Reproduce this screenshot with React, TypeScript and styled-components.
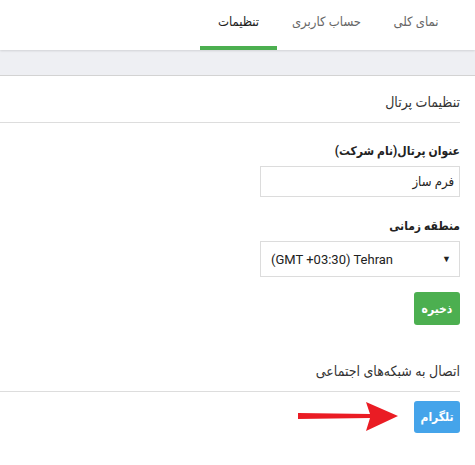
import styled, { createGlobalStyle } from "styled-components";

const GlobalStyle = createGlobalStyle`
  html, body {
    margin: 0;
    padding: 0;
    background: #fff;
  }
  body {
    font-family: "Roboto", "DejaVu Sans Condensed", "DejaVu Sans", sans-serif;
    color: #333;
  }
`;

const Page = styled.div`
  width: 475px;
  height: 465px;
  overflow: hidden;
  direction: rtl;
  background: #fff;
`;

const TabBar = styled.div`
  height: 50px;
  display: flex;
  align-items: stretch;
  padding-right: 19px;
  background: #fff;
  box-shadow: 0 1px 2px rgba(0, 0, 0, 0.12);
  position: relative;
  z-index: 1;
`;

const Tab = styled.div<{ $active?: boolean; $width: number }>`
  width: ${(p) => p.$width}px;
  display: flex;
  align-items: center;
  justify-content: center;
  padding-bottom: 4px;
  font-size: 13px;
  color: ${(p) => (p.$active ? "#222" : "#666")};
  border-bottom: 4px solid ${(p) => (p.$active ? "#4caf50" : "transparent")};
  box-sizing: border-box;
`;

const Band = styled.div`
  height: 25px;
  background: #eeeff3;
  border-bottom: 1px solid #d3d3d3;
`;

const Content = styled.div`
  padding-right: 15px;
`;

const SectionTitle = styled.div<{ $top: number }>`
  margin-top: ${(p) => p.$top}px;
  font-size: 14px;
  line-height: 20px;
  color: #333;
  padding: 0 0 10px;
  border-bottom: 1px solid #ddd;
`;

const Label = styled.div<{ $top: number }>`
  margin-top: ${(p) => p.$top}px;
  font-size: 12px;
  font-weight: bold;
  line-height: 18px;
  color: #222;
`;

const Input = styled.div`
  margin-top: 6px;
  width: 200px;
  height: 31px;
  box-sizing: border-box;
  border: 1px solid #dcdcdc;
  padding: 0 5px;
  display: flex;
  align-items: center;
  font-size: 13px;
  color: #222;
`;

const Select = styled.div`
  margin-top: 6px;
  width: 200px;
  height: 36px;
  box-sizing: border-box;
  border: 1px solid #dcdcdc;
  padding: 0 8px 0 10px;
  display: flex;
  align-items: center;
  justify-content: space-between;
  direction: ltr;
  font-family: "Roboto", "Liberation Sans", sans-serif;
  font-size: 13px;
  color: #222;
`;

const Caret = styled.span`
  font-size: 9px;
  color: #222;
`;

const Button = styled.div<{ $color: string; $height: number; $top: number }>`
  margin-top: ${(p) => p.$top}px;
  width: 46px;
  height: ${(p) => p.$height}px;
  background: ${(p) => p.$color};
  border-radius: 3px;
  color: #fff;
  font-size: 12px;
  font-weight: bold;
  display: flex;
  align-items: center;
  justify-content: center;
  flex-shrink: 0;
`;

const ButtonRow = styled.div`
  display: flex;
  align-items: center;
  gap: 14px;
  margin-top: 9px;
`;

const Arrow = () => (
  <svg width="102" height="30" viewBox="0 0 102 30">
    <path d="M100 14 L68 0 L72 12 L0 11 L0 17 L72 16 L68 29 Z" fill="#ea1c24" />
  </svg>
);

export default function App() {
  return (
    <>
      <GlobalStyle />
      <Page>
        <TabBar>
          <Tab $width={80}>نمای کلی</Tab>
          <Tab $width={99}>حساب کاربری</Tab>
          <Tab $width={77} $active>
            تنظیمات
          </Tab>
        </TabBar>
        <Band />
        <Content>
          <SectionTitle $top={16}>تنظیمات پرتال</SectionTitle>
          <Label $top={19}>عنوان پرتال(نام شرکت)</Label>
          <Input>فرم ساز</Input>
          <Label $top={20}>منطقه زمانی</Label>
          <Select>
            <span>(GMT +03:30) Tehran</span>
            <Caret>▼</Caret>
          </Select>
          <Button $color="#4caf50" $height={33} $top={15}>
            ذخیره
          </Button>
          <SectionTitle $top={36}>اتصال به شبکه‌های اجتماعی</SectionTitle>
          <ButtonRow>
            <Button $color="#45a4ea" $height={32} $top={0}>
              تلگرام
            </Button>
            <Arrow />
          </ButtonRow>
        </Content>
      </Page>
    </>
  );
}
